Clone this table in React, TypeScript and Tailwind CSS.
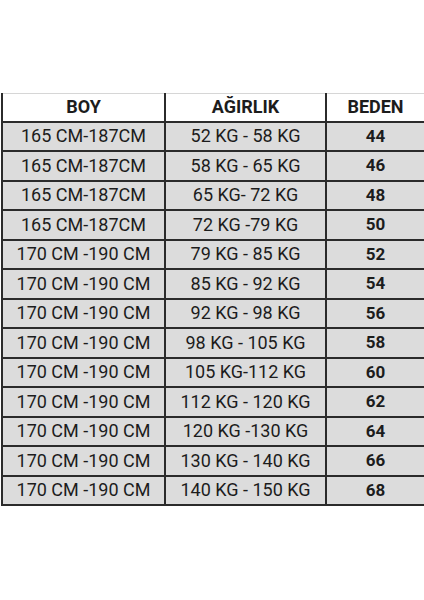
import React from "react";

const rows: [string, string, string][] = [
  ["165 CM-187CM", "52 KG - 58 KG", "44"],
  ["165 CM-187CM", "58 KG - 65 KG", "46"],
  ["165 CM-187CM", "65 KG- 72 KG", "48"],
  ["165 CM-187CM", "72 KG -79 KG", "50"],
  ["170 CM -190 CM", "79 KG - 85 KG", "52"],
  ["170 CM -190 CM", "85 KG - 92 KG", "54"],
  ["170 CM -190 CM", "92 KG - 98 KG", "56"],
  ["170 CM -190 CM", "98 KG - 105 KG", "58"],
  ["170 CM -190 CM", "105 KG-112 KG", "60"],
  ["170 CM -190 CM", "112 KG - 120 KG", "62"],
  ["170 CM -190 CM", "120 KG -130 KG", "64"],
  ["170 CM -190 CM", "130 KG - 140 KG", "66"],
  ["170 CM -190 CM", "140 KG - 150 KG", "68"],
];

export default function App() {
  return (
    <div
      className="w-[424px] h-[600px] bg-white pt-[93px] pl-px"
      style={{ fontFamily: "Roboto, 'Liberation Sans', sans-serif" }}
    >
      <table className="w-[423px] border-collapse table-fixed text-[#1c1c1c]">
        <colgroup>
          <col className="w-[163px]" />
          <col className="w-[161px]" />
          <col className="w-[99px]" />
        </colgroup>
        <thead>
          <tr className="h-[28px] bg-white">
            <th className="border-2 border-[#2b2b2b] border-t-[#d6d6d6] border-t text-[18px] font-bold leading-none">BOY</th>
            <th className="border-2 border-[#2b2b2b] border-t-[#d6d6d6] border-t text-[18px] font-bold leading-none">AĞIRLIK</th>
            <th className="border-2 border-[#2b2b2b] border-t-[#d6d6d6] border-t text-[18px] font-bold leading-none">BEDEN</th>
          </tr>
        </thead>
        <tbody>
          {rows.map((r, i) => (
            <tr key={i} className="h-[29.5px] bg-[#dcdcdc]">
              <td className="border-2 border-[#2b2b2b] text-center text-[18px] leading-none">{r[0]}</td>
              <td className="border-2 border-[#2b2b2b] text-center text-[18px] leading-none">{r[1]}</td>
              <td className="border-2 border-[#2b2b2b] text-center text-[17px] font-bold leading-none">{r[2]}</td>
            </tr>
          ))}
        </tbody>
      </table>
    </div>
  );
}
